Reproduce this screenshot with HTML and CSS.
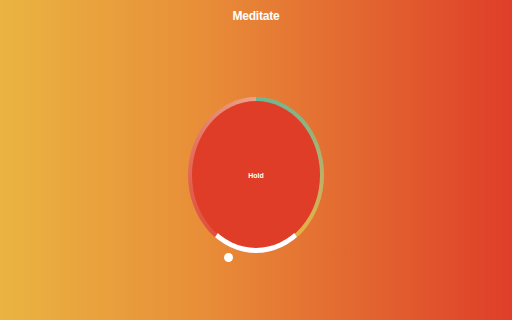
FILE: index.html
```html
<!DOCTYPE html>
<html lang="en">
<head>
    <meta charset="UTF-8">
    <meta name="viewport" content="width=device-width, initial-scale=1.0">
    <title>Meditate</title>
    <link rel="stylesheet" href="styles.css">
</head>
<body>
    <header class="top">
        <h1>Meditate</h1>
    </header>

    <main class="stage">
        <!-- Breathing circle -->
        <div class="breath">
            <div class="ring"></div>
            <div class="core">
                <span class="phase">Hold</span>
            </div>
            <div class="progress"></div>
            <div class="dot"></div>
        </div>
    </main>
</body>
</html>
```

FILE: styles.css
```css
* {
    margin: 0;
    padding: 0;
    box-sizing: border-box;
}

body {
    display: flex;
    flex-direction: column;
    height: 100vh;
    overflow: hidden;
    font-family: "Liberation Sans", Arial, sans-serif;
    color: #fff;
    background: linear-gradient(90deg, #eab441 0%, #e88d38 40%, #e2602f 75%, #df3e29 100%);
}

/* Title */
.top {
    height: 30px;
    display: flex;
    justify-content: center;
    align-items: center;
    padding-top: 2px;
}

.top h1 {
    font-size: 12px;
    font-weight: bold;
    letter-spacing: -0.2px;
}

/* Stage */
.stage {
    flex: 1;
    display: flex;
    justify-content: center;
    align-items: center;
}

.breath {
    position: relative;
    width: 136px;
    height: 156px;
}

.ring {
    width: 100%;
    height: 100%;
    border-radius: 50%;
    background: conic-gradient(
        #6db694 0deg,
        #86b585 40deg,
        #bcb06a 90deg,
        #e2b247 140deg,
        #e2b247 147deg,
        #e0503d 147deg,
        #e0503d 214deg,
        #e2604e 260deg,
        #e67c66 310deg,
        #eba387 360deg
    );
}

.core {
    position: absolute;
    top: 4px;
    left: 4px;
    right: 4px;
    bottom: 4px;
    border-radius: 50%;
    background-color: #df3d27;
    display: flex;
    justify-content: center;
    align-items: center;
}

.phase {
    font-size: 7px;
    font-weight: bold;
    padding-top: 1px;
}

/* White progress arc at the bottom */
.progress {
    position: absolute;
    top: 0;
    left: 0;
    right: 0;
    bottom: 0;
    border-radius: 50%;
    border: 5px solid transparent;
    border-bottom-color: #fff;
    clip-path: polygon(68px 78px, 14px 160px, 122px 160px);
}

.dot {
    position: absolute;
    left: 36px;
    top: 156px;
    width: 9px;
    height: 9px;
    border-radius: 50%;
    background-color: #fff;
}
```
